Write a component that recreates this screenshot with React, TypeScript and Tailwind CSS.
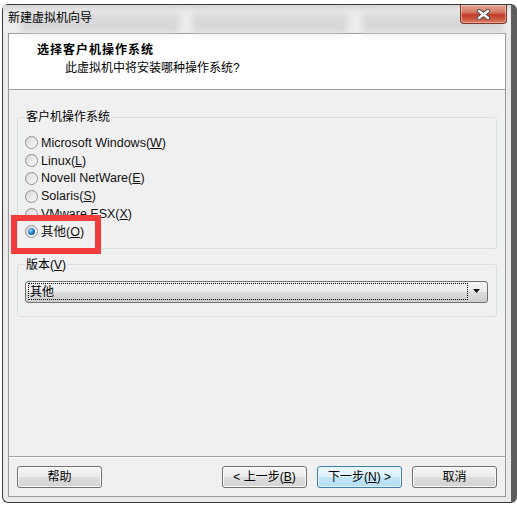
import type { ReactNode } from "react";

const FONT = "font-['Liberation_Sans','Noto_Sans_CJK_SC',sans-serif]";

function Radio({ children, checked }: { children: ReactNode; checked?: boolean }) {
    return (
        <div className="flex h-[17.8px] items-center">
            <span className="flex h-[13px] w-[13px] items-center justify-center rounded-full border border-[#8f8f8f] bg-[linear-gradient(135deg,#d4d4d4,#f4f4f4_70%,#ffffff)]">
                {checked ? (
                    <span className="h-[7px] w-[7px] rounded-full bg-[radial-gradient(circle_at_35%_35%,#a8dcff,#2a7fc4_45%,#0f3f70)]" />
                ) : (
                    <span className="h-[9px] w-[9px] rounded-full bg-[linear-gradient(135deg,#dcdcdc,#f6f6f6)]" />
                )}
            </span>
            <span className="ml-[3px] text-[12.5px] leading-[16px] text-[#111]">{children}</span>
        </div>
    );
}

function Btn({ children, primary }: { children: ReactNode; primary?: boolean }) {
    return (
        <button
            className={
                primary
                    ? "h-[22px] w-[85px] rounded-[3px] border border-[#3c7fb1] bg-[linear-gradient(to_bottom,#ecf7fd,#dcf1fc_50%,#c4e6f8_50%,#b2dcf3)] shadow-[inset_0_0_0_1px_#e9f6fd] text-[12px] leading-[16px] text-black"
                    : "h-[22px] w-[85px] rounded-[3px] border border-[#707070] bg-[linear-gradient(to_bottom,#f4f4f4,#ececec_50%,#dedede_50%,#d2d2d2)] shadow-[inset_0_0_0_1px_#fbfbfb] text-[12px] leading-[16px] text-black"
            }
        >
            {children}
        </button>
    );
}

export default function App() {
    return (
        <div className={`relative h-[507px] w-[517px] overflow-hidden bg-white pl-[2px] pt-[4px] ${FONT}`}>
            {/* Window frame */}
            <div className="flex h-[499px] w-[515px] flex-col rounded-[6px] border border-r-[6px] border-[#3a3a3a] border-r-[#5e5e5e] bg-[#e9e9e9]">
                {/* Title bar */}
                <div className="relative flex h-[28px] shrink-0 items-start justify-between bg-[linear-gradient(to_bottom,#d6d6d6,#ececec_8px,#eeeeee)]">
                    <div className="absolute left-[17px] top-[8px] h-[20px] w-[160px] rounded-[4px] bg-[#d8d8d8] blur-[3px]" />
                    <div className="absolute left-[189px] top-[8px] h-[20px] w-[156px] rounded-[4px] bg-[#d8d8d8] blur-[3px]" />
                    <div className="absolute left-[359px] top-[8px] h-[20px] w-[141px] rounded-[4px] bg-[#d8d8d8] blur-[3px]" />
                    <span className="relative ml-[5px] mt-[5px] text-[12px] leading-[16px] text-black">新建虚拟机向导</span>
                    <button className="relative mr-[4px] flex h-[19px] w-[47px] items-center justify-center rounded-b-[4px] border border-t-0 border-[#7a3a30] bg-[linear-gradient(to_bottom,#e6a696,#d57a66_40%,#c13b27_55%,#cf5b44_80%,#dc8069)] shadow-[inset_0_0_0_1px_rgba(255,220,210,0.45)]">
                        <svg width="15" height="11" viewBox="0 0 15 11">
                            <path d="M3 2 L12 9 M12 2 L3 9" stroke="#4a4a4a" strokeWidth="4.4" strokeLinecap="round" />
                            <path d="M3 2 L12 9 M12 2 L3 9" stroke="#ffffff" strokeWidth="2.4" strokeLinecap="round" />
                        </svg>
                    </button>
                </div>

                {/* Client area */}
                <div className="ml-[5px] flex h-[464px] w-[498px] flex-col border border-[#9a9a9a] bg-[#f0f0f0]">
                    {/* Header */}
                    <div className="h-[56px] shrink-0 border-b border-[#a0a0a0] bg-white">
                        <div className="pl-[28px] pt-[8px] text-[12px] font-bold leading-[16px] tracking-[1px] text-black">选择客户机操作系统</div>
                        <div className="mt-[2px] pl-[56px] text-[12px] leading-[16px] text-black">此虚拟机中将安装哪种操作系统?</div>
                    </div>

                    {/* Body */}
                    <div className="flex flex-1 flex-col pl-[8px]">
                        <fieldset className="mt-[19px] w-[480px] rounded-[3px] border border-[#d5dfe5] pb-[7px] pl-[7px] pr-[8px] pt-[9px]">
                            <legend className="px-[1px] text-[12px] leading-[16px] text-black">客户机操作系统</legend>
                            <Radio>
                                Microsoft Windows(<span className="underline">W</span>)
                            </Radio>
                            <Radio>
                                Linux(<span className="underline">L</span>)
                            </Radio>
                            <Radio>
                                Novell NetWare(<span className="underline">E</span>)
                            </Radio>
                            <Radio>
                                Solaris(<span className="underline">S</span>)
                            </Radio>
                            <Radio>
                                VMware ESX(<span className="underline">X</span>)
                            </Radio>
                            <Radio checked>
                                其他(<span className="underline">O</span>)
                            </Radio>
                        </fieldset>

                        <fieldset className="mt-[8px] w-[480px] rounded-[3px] border border-[#d5dfe5] pb-[13px] pl-[7px] pr-[8px] pt-[8px]">
                            <legend className="px-[1px] text-[12px] leading-[16px] text-black">
                                版本(<span className="underline">V</span>)
                            </legend>
                            <div className="flex h-[22px] items-center rounded-[3px] border border-[#707070] bg-[linear-gradient(to_bottom,#f2f2f2,#ebebeb_50%,#dddddd_50%,#cfcfcf)] px-[2px]">
                                <div className="flex h-[17px] flex-1 items-center border border-dotted border-black pl-[1px] text-[12px] leading-[16px] text-black">
                                    其他
                                </div>
                                <div className="flex w-[17px] justify-center">
                                    <svg width="8" height="5" viewBox="0 0 8 5">
                                        <path d="M0 0 H7 L3.5 4 Z" fill="#111" />
                                    </svg>
                                </div>
                            </div>
                        </fieldset>
                    </div>

                    {/* Footer */}
                    <div className="flex h-[40px] shrink-0 items-start justify-between border-t border-[#a0a0a0] px-[8px] pt-[9px] shadow-[inset_0_1px_0_#ffffff]">
                        <Btn>帮助</Btn>
                        <div className="flex gap-[10px]">
                            <Btn>
                                &lt; 上一步(<span className="underline">B</span>)
                            </Btn>
                            <Btn primary>
                                下一步(<span className="underline">N</span>) &gt;
                            </Btn>
                            <Btn>取消</Btn>
                        </div>
                    </div>
                </div>
            </div>

            {/* Red highlight annotation */}
            <div className="absolute left-[11px] top-[215px] h-[39px] w-[90px] border-[6px] border-[#f23b3b]" />
        </div>
    );
}
